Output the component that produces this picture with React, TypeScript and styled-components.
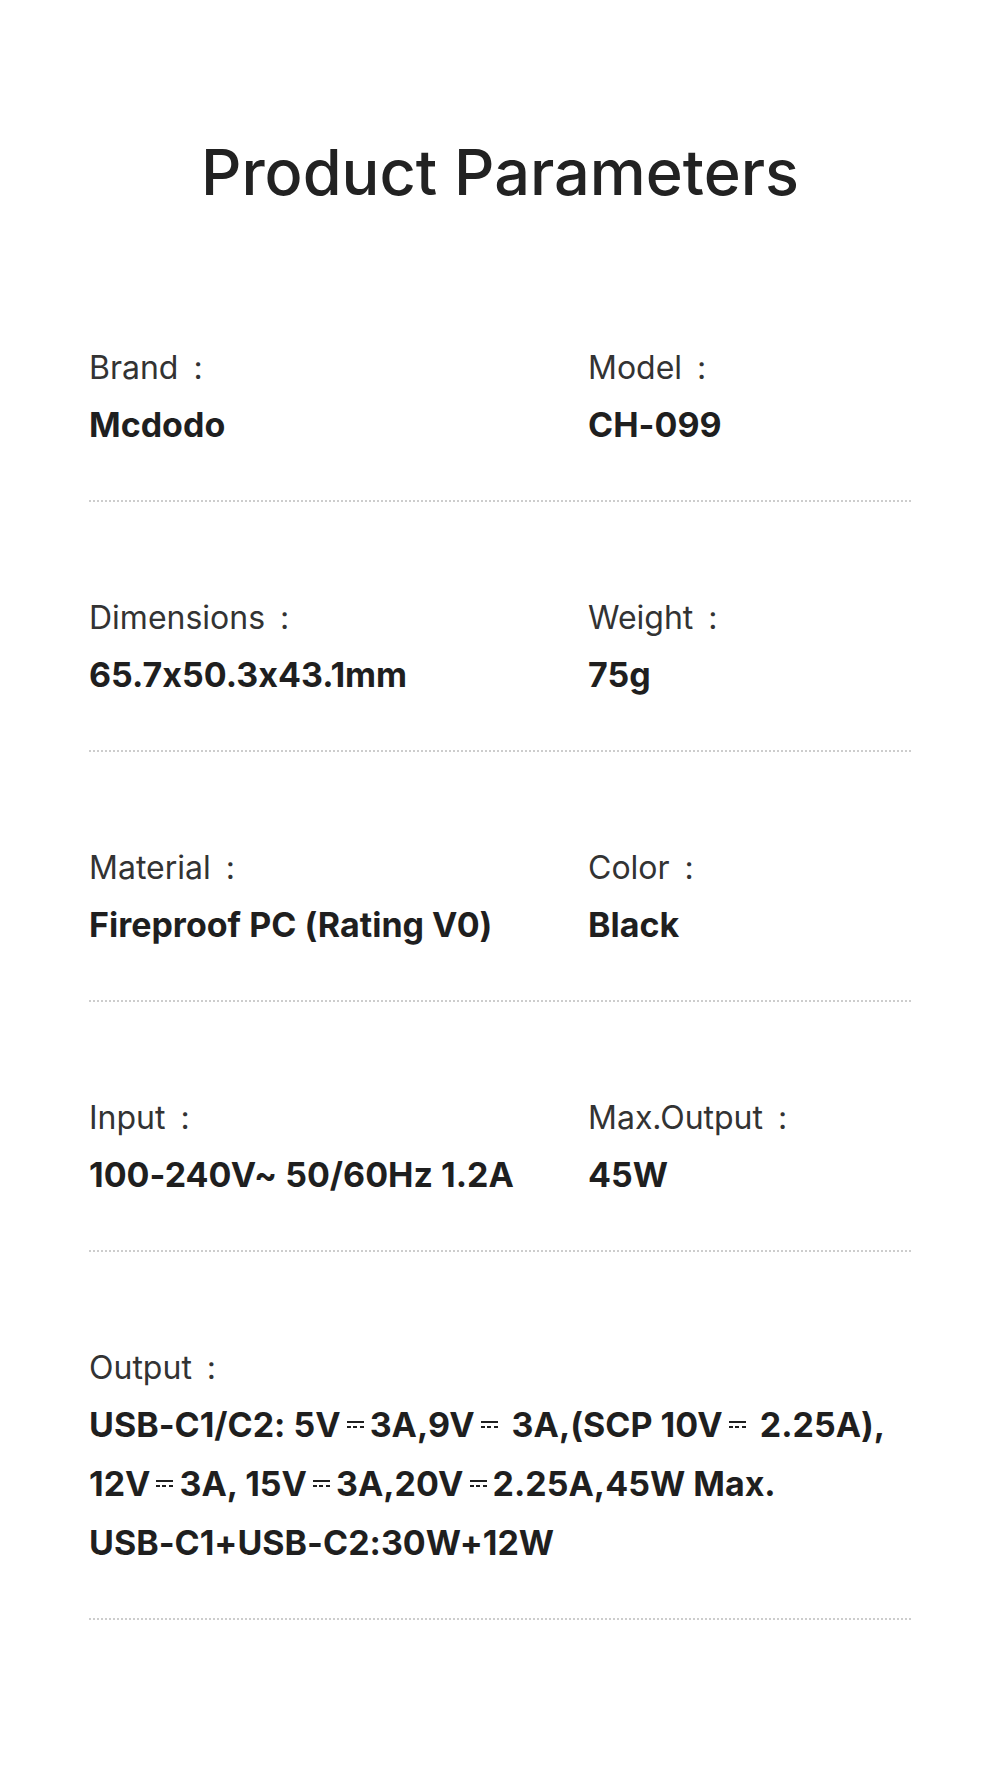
import React from 'react';
import styled, { createGlobalStyle } from 'styled-components';

const GlobalStyle = createGlobalStyle`
  html,
  body {
    margin: 0;
    padding: 0;
    background: #fff;
  }

  body {
    font-family: Inter, 'Noto Sans', 'Noto Sans CJK SC', sans-serif;
    font-feature-settings: 'calt' 0;
    -webkit-font-smoothing: antialiased;
  }
`;

type Param = {
  label: string;
  value: React.ReactNode;
};

// 直流記号（実線＋破線）
const Dc: React.FC = () => <StyledDc aria-label="DC" />;

const rows: Param[][] = [
  [
    { label: 'Brand', value: 'Mcdodo' },
    { label: 'Model', value: 'CH-099' },
  ],
  [
    { label: 'Dimensions', value: '65.7x50.3x43.1mm' },
    { label: 'Weight', value: '75g' },
  ],
  [
    { label: 'Material', value: 'Fireproof PC (Rating V0)' },
    { label: 'Color', value: 'Black' },
  ],
  [
    { label: 'Input', value: '100-240V~ 50/60Hz 1.2A' },
    { label: 'Max.Output', value: '45W' },
  ],
];

const outputLines: React.ReactNode[] = [
  <>
    USB-C1/C2: 5V
    <Dc />
    3A,9V
    <Dc /> 3A,(SCP 10V
    <Dc /> 2.25A),
  </>,
  <>
    12V
    <Dc />
    3A, 15V
    <Dc />
    3A,20V
    <Dc />
    2.25A,45W Max.
  </>,
  <>USB-C1+USB-C2:30W+12W</>,
];

const App: React.FC = () => {
  return (
    <>
      <GlobalStyle />
      <StyledPage>
        <StyledTitle>Product Parameters</StyledTitle>
        <StyledList>
          {rows.map((row, index) => (
            <StyledRow key={index}>
              {row.map((item) => (
                <StyledCell key={item.label}>
                  <StyledLabel>
                    {item.label}
                    <StyledColon>:</StyledColon>
                  </StyledLabel>
                  <StyledValue>{item.value}</StyledValue>
                </StyledCell>
              ))}
            </StyledRow>
          ))}
          <StyledRow single>
            <StyledCell>
              <StyledLabel>
                Output
                <StyledColon>:</StyledColon>
              </StyledLabel>
              {outputLines.map((line, index) => (
                <StyledValue key={index}>{line}</StyledValue>
              ))}
            </StyledCell>
          </StyledRow>
        </StyledList>
      </StyledPage>
    </>
  );
};

export default App;

const StyledPage = styled.div`
  width: 1000px;
  min-height: 1784px;
  padding-top: 140px;
  box-sizing: border-box;
  background: #fff;
`;

const StyledTitle = styled.h1`
  margin: 0;
  font-size: 63px;
  line-height: 64px;
  font-weight: 500;
  color: #222;
  text-align: center;
`;

const StyledList = styled.div`
  margin: 48px 89px 0;
`;

const StyledRow = styled.div<{ single?: boolean }>`
  display: grid;
  grid-template-columns: ${(p) => (p.single ? '1fr' : '499px 1fr')};
  padding: 96px 0 46px;
  border-bottom: 2px dotted #cdcdcd;
`;

const StyledCell = styled.div`
  display: flex;
  flex-direction: column;
`;

const StyledLabel = styled.div`
  font-size: 32px;
  line-height: 40px;
  font-weight: 400;
  color: #333;
  margin-bottom: 7px;
`;

const StyledColon = styled.span`
  margin-left: 15px;
`;

const StyledValue = styled.div`
  font-size: 34px;
  line-height: 59px;
  font-weight: 700;
  color: #1f1f1f;
  white-space: nowrap;
`;

const StyledDc = styled.span`
  display: inline-block;
  width: 17px;
  height: 7px;
  margin: 0 6px 9px;
  box-sizing: border-box;
  border-top: 2px solid currentColor;
  background: repeating-linear-gradient(
      to right,
      currentColor 0 4px,
      transparent 4px 6.5px
    )
    bottom / 100% 2px no-repeat;
`;
